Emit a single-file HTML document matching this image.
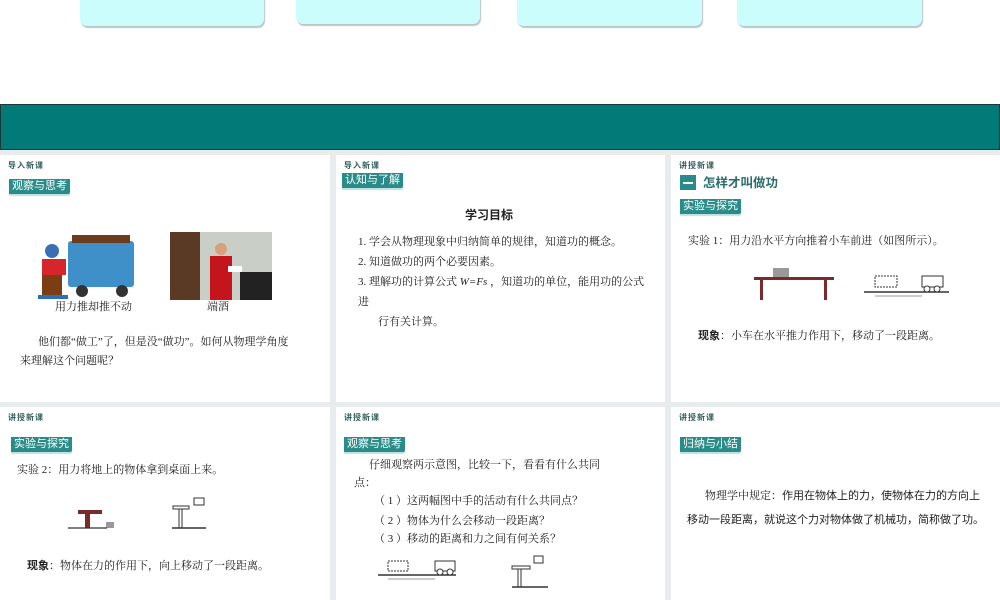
<!DOCTYPE html>
<html><head><meta charset="utf-8"><style>
*{margin:0;padding:0;box-sizing:border-box}
body{width:1000px;height:600px;overflow:hidden;background:#fff;position:relative;font-family:"Liberation Serif","Noto Serif CJK SC",serif;color:#222}
.card{position:absolute;top:-6px;height:32px;background:#ccfdfd;border-radius:0 0 7px 7px;box-shadow:1px 2px 1px #b9c6c6}
.band{position:absolute;left:0;top:104px;width:1000px;height:46px;background:#027b78;border:1px solid #1b3b3a}
.grey{position:absolute;left:0;top:150px;width:1000px;height:450px;background:#e8ecec}
.p{position:absolute;background:#fff;overflow:hidden}
.h{position:absolute;left:8px;top:5px;font:bold 8px "Liberation Sans","Noto Sans CJK SC",sans-serif;color:#2f5e5a;letter-spacing:1px}
.tag{position:absolute;left:9px;height:15px;background:#2a8c88;color:#fff;font:11px/15px "Liberation Sans","Noto Sans CJK SC",sans-serif;padding:0 3px;border-bottom-right-radius:2px;box-shadow:0 2px 1px #bfe0de}
.t{position:absolute;font-size:11px;white-space:nowrap;line-height:16px}
.s{font-family:"Liberation Sans","Noto Sans CJK SC",sans-serif}
</style></head><body>
<div class="card" style="left:80px;width:184px"></div>
<div class="card" style="left:296px;width:184px;height:30px"></div>
<div class="card" style="left:517px;width:185px"></div>
<div class="card" style="left:737px;width:185px"></div>
<div class="band"></div>
<div class="grey"></div>

<!-- panel 1 -->
<div class="p" style="left:0;top:155px;width:330px;height:247px">
<div class="h">导入新课</div>
<div class="tag" style="top:24px">观察与思考</div>
<svg style="position:absolute;left:38px;top:78px" width="100" height="70">
<rect x="30" y="8" width="66" height="46" rx="3" fill="#3f8fc9"/>
<rect x="34" y="2" width="58" height="8" fill="#6b3d1c"/>
<circle cx="44" cy="58" r="6" fill="#333"/><circle cx="84" cy="58" r="6" fill="#333"/>
<circle cx="14" cy="18" r="7" fill="#3a6fb5"/>
<rect x="4" y="26" width="24" height="16" fill="#d6262b"/>
<rect x="4" y="42" width="20" height="20" fill="#7b3e12"/>
<rect x="0" y="62" width="30" height="4" fill="#2a6fb8"/>
</svg>
<svg style="position:absolute;left:170px;top:77px" width="102" height="68">
<rect width="102" height="68" fill="#c9cfc7"/>
<rect x="0" y="0" width="30" height="68" fill="#5a3a24"/>
<rect x="70" y="40" width="32" height="28" fill="#222"/>
<circle cx="51" cy="17" r="6" fill="#d7a07a"/>
<rect x="40" y="24" width="22" height="44" fill="#c4151d"/>
<rect x="58" y="34" width="14" height="6" fill="#fff"/>
</svg>
<div class="t" style="left:55px;top:144px">用力推却推不动</div>
<div class="t" style="left:207px;top:144px">端酒</div>
<div class="t" style="left:38px;top:179px">他们都“做工”了，但是没“做功”。如何从物理学角度</div>
<div class="t" style="left:20px;top:198px">来理解这个问题呢？</div>
</div>

<!-- panel 2 -->
<div class="p" style="left:336px;top:155px;width:329px;height:247px">
<div class="h">导入新课</div>
<div class="tag" style="top:18px;left:6px">认知与了解</div>
<div class="t s" style="left:129px;top:52px;font-size:12px;font-weight:bold">学习目标</div>
<div class="t" style="left:22px;top:79px">1. 学会从物理现象中归纳简单的规律，知道功的概念。</div>
<div class="t" style="left:22px;top:99px">2. 知道做功的两个必要因素。</div>
<div class="t" style="left:22px;top:119px">3. 理解功的计算公式 <i>W=Fs</i> ，知道功的单位，能用功的公式</div>
<div class="t" style="left:22px;top:139px">进</div>
<div class="t" style="left:42px;top:159px">行有关计算。</div>
</div>

<!-- panel 3 -->
<div class="p" style="left:671px;top:155px;width:329px;height:247px">
<div class="h">讲授新课</div>
<div style="position:absolute;left:9px;top:20px;width:16px;height:15px;background:#2a8c88"></div>
<div style="position:absolute;left:12px;top:27px;width:10px;height:1.5px;background:#fff"></div>
<div class="t s" style="left:32px;top:20px;font-size:12.5px;font-weight:bold;color:#2a6d6a">怎样才叫做功</div>
<div class="tag" style="top:44px">实验与探究</div>
<div class="t" style="left:17px;top:78px">实验 1：用力沿水平方向推着小车前进（如图所示）。</div>
<svg style="position:absolute;left:80px;top:107px" width="200" height="40">
<rect x="22" y="6" width="16" height="9" fill="#999"/>
<rect x="3" y="15" width="80" height="3" fill="#7a2a2a"/>
<rect x="9" y="18" width="3" height="20" fill="#7a2a2a"/><rect x="73" y="18" width="3" height="20" fill="#7a2a2a"/>
<line x1="113" y1="30" x2="198" y2="30" stroke="#333" stroke-width="1.5"/>
<rect x="124" y="14" width="22" height="11" fill="none" stroke="#333" stroke-dasharray="2,1"/>
<rect x="171" y="14" width="21" height="11" fill="none" stroke="#333"/>
<circle cx="176" cy="27" r="3" fill="#fff" stroke="#333"/><circle cx="186" cy="27" r="3" fill="#fff" stroke="#333"/>
<line x1="124" y1="34" x2="171" y2="34" stroke="#333" stroke-width=".6"/>
</svg>
<div class="t" style="left:27px;top:173px"><b class="s">现象</b>：小车在水平推力作用下，移动了一段距离。</div>
</div>

<!-- panel 4 -->
<div class="p" style="left:0;top:407px;width:330px;height:193px">
<div class="h">讲授新课</div>
<div class="tag" style="top:30px;left:11px">实验与探究</div>
<div class="t" style="left:17px;top:55px">实验 2：用力将地上的物体拿到桌面上来。</div>
<svg style="position:absolute;left:66px;top:84px" width="140" height="40">
<rect x="12" y="19" width="24" height="4" fill="#7a2a2a"/><rect x="19" y="23" width="5" height="14" fill="#7a2a2a"/>
<rect x="40" y="31" width="8" height="6" fill="#999"/>
<line x1="2" y1="37" x2="41" y2="37" stroke="#333" stroke-width="1.2"/>
<rect x="107" y="15" width="16" height="3" fill="none" stroke="#333"/><rect x="113" y="18" width="3" height="19" fill="none" stroke="#333"/>
<rect x="128" y="7" width="10" height="7" fill="none" stroke="#333"/>
<line x1="106" y1="37" x2="142" y2="37" stroke="#333" stroke-width="1.5"/>
</svg>
<div class="t" style="left:27px;top:151px"><b class="s">现象</b>：物体在力的作用下，向上移动了一段距离。</div>
</div>

<!-- panel 5 -->
<div class="p" style="left:336px;top:407px;width:329px;height:193px">
<div class="h">讲授新课</div>
<div class="tag" style="top:30px;left:8px">观察与思考</div>
<div class="t" style="left:33px;top:50px">仔细观察两示意图，比较一下，看看有什么共同</div>
<div class="t" style="left:18px;top:68px">点：</div>
<div class="t" style="left:38px;top:86px">（ 1 ）这两幅图中手的活动有什么共同点？</div>
<div class="t" style="left:38px;top:106px">（ 2 ）物体为什么会移动一段距离？</div>
<div class="t" style="left:38px;top:124px">（ 3 ）移动的距离和力之间有何关系？</div>
<svg style="position:absolute;left:40px;top:145px" width="190" height="40">
<line x1="2" y1="23" x2="80" y2="23" stroke="#333" stroke-width="1.4"/>
<rect x="12" y="9" width="20" height="10" fill="none" stroke="#333" stroke-dasharray="2,1"/>
<rect x="59" y="9" width="20" height="10" fill="none" stroke="#333"/>
<circle cx="64" cy="20" r="3" fill="#fff" stroke="#333"/><circle cx="74" cy="20" r="3" fill="#fff" stroke="#333"/>
<line x1="12" y1="27" x2="59" y2="27" stroke="#333" stroke-width=".6"/>
<rect x="136" y="14" width="18" height="3" fill="none" stroke="#333"/><rect x="142" y="17" width="3" height="18" fill="none" stroke="#333"/>
<rect x="158" y="4" width="9" height="7" fill="none" stroke="#333"/>
<line x1="136" y1="35" x2="172" y2="35" stroke="#333" stroke-width="1.5"/>
</svg>
</div>

<!-- panel 6 -->
<div class="p" style="left:671px;top:407px;width:329px;height:193px">
<div class="h">讲授新课</div>
<div class="tag" style="top:30px">归纳与小结</div>
<div class="t" style="left:34px;top:81px">物理学中规定：<span class="s">作用在物体上的力，使物体在力的方向上</span></div>
<div class="t s" style="left:16px;top:105px">移动一段距离，就说这个力对物体做了机械功，简称做了功。</div>
</div>
</body></html>
